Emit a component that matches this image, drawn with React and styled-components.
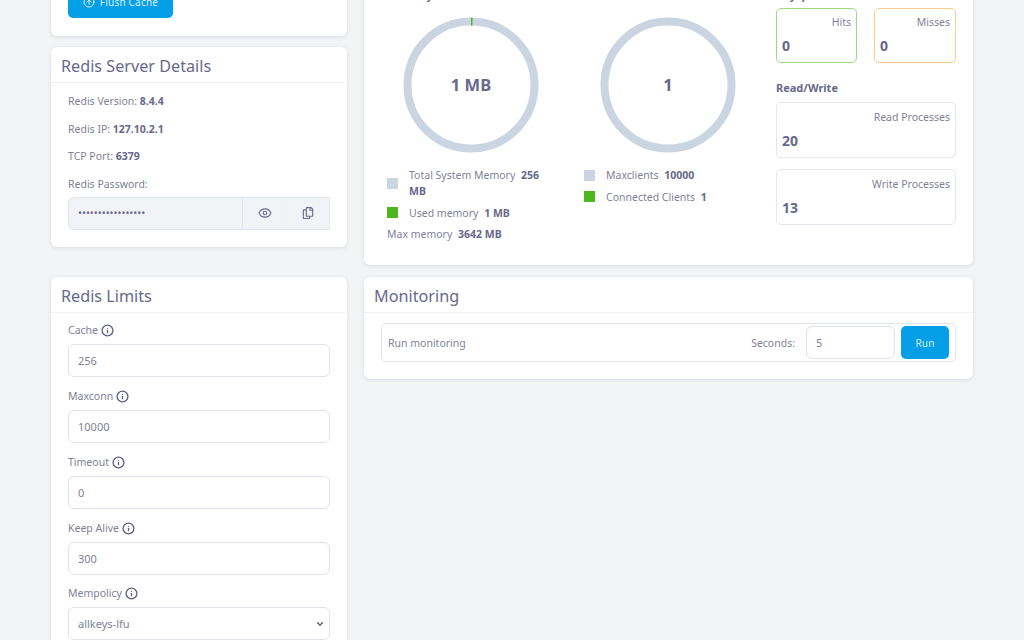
import React from "react";
import styled, { createGlobalStyle } from "styled-components";
import { CircleArrowUp, Eye, Info } from "lucide-react";
import { FaRegCopy } from "react-icons/fa";

const GlobalStyle = createGlobalStyle`
  html, body {
    margin: 0;
    height: 640px;
    overflow: hidden;
    background: #f3f4f6;
  }
  * { box-sizing: border-box; }
  body {
    font-family: "Noto Sans", "Open Sans", sans-serif;
    font-size: 10.5px;
    line-height: 16px;
    color: #7f7f98;
  }
`;

const STRONG = "#68688a";
const GREY = "#cbd5e1";
const GREEN = "#4cb71e";
const CHEVRON =
  "data:image/svg+xml,%3Csvg xmlns='http://www.w3.org/2000/svg' width='8' height='6' viewBox='0 0 8 6'%3E%3Cpath d='M1.2 1.4 4 4.2l2.8-2.8' fill='none' stroke='%2368688a' stroke-width='1.6'/%3E%3C/svg%3E";

const Page = styled.div`
  margin-top: -60px;
  padding: 0 51px;
  width: 1024px;
`;

const Row = styled.div`
  display: grid;
  grid-template-columns: 296px 609px;
  column-gap: 17px;
  align-items: ${(p) => p.$align || "stretch"};
  margin-bottom: 12px;
`;

const Stack = styled.div`
  display: flex;
  flex-direction: column;
  gap: 11px;
  padding-bottom: 18px;
`;

const Card = styled.section`
  background: #fff;
  border-radius: 6px;
  box-shadow: 0 1px 4px rgba(60, 70, 100, 0.14);
`;

const CardHeader = styled.h3`
  margin: 0;
  height: 36px;
  padding: 0 10px;
  font-size: 16.2px;
  font-weight: 400;
  line-height: 38px;
  color: ${STRONG};
  border-bottom: 1px solid #f1f2f6;
`;

const FlushBody = styled.div`
  padding: 46px 17px 18px;
`;

const Button = styled.button`
  display: inline-flex;
  align-items: center;
  justify-content: center;
  gap: 5px;
  height: ${(p) => (p.$wide ? "32px" : "33px")};
  width: ${(p) => (p.$wide ? "105px" : "48px")};
  padding: 0;
  font: inherit;
  font-size: 10px;
  letter-spacing: 0.2px;
  color: rgba(255, 255, 255, 0.85);
  background: #049fe6;
  border: 0;
  border-radius: 5px;
`;

const DetailsBody = styled.div`
  padding: 10px 17px 17px;
`;

const Detail = styled.div`
  margin-bottom: 11.6px;
  b {
    font-weight: 700;
    color: ${STRONG};
  }
`;

const PasswordLabel = styled.div`
  margin-bottom: 5px;
`;

const PasswordGroup = styled.div`
  display: flex;
  height: 33px;
  background: #f2f3f7;
  border: 1px solid #e2e5ee;
  border-radius: 6px 0 0 6px;
`;

const PasswordInput = styled.input`
  flex: 1;
  min-width: 0;
  padding: 0 9px;
  font: inherit;
  font-size: 10.5px;
  color: ${STRONG};
  background: transparent;
  border: 0;
  outline: 0;
`;

const IconCell = styled.div`
  display: flex;
  align-items: center;
  justify-content: center;
  width: ${(p) => (p.$faint ? "43px" : "44px")};
  color: #6c6c8e;
  border-left: 1px solid ${(p) => (p.$faint ? "#eef0f4" : "#e2e5ee")};
`;

const MetricsGrid = styled.div`
  display: grid;
  grid-template-columns: 197px 192px 180px;
  padding: 11px 0 23px 23px;
`;

const SectionLabel = styled.div`
  margin-bottom: ${(p) => p.$gap || 5}px;
  margin-top: ${(p) => p.$top || 0}px;
  font-size: 11px;
  font-weight: 700;
  color: ${STRONG};
`;

const ChartColumn = styled.div`
  width: 168px;
`;

const Donut = styled.div`
  display: grid;
  place-items: center;
  width: 136px;
  height: 136px;
  margin: 14px auto 14px;
  > * {
    grid-area: 1 / 1;
  }
`;

const DonutValue = styled.div`
  font-size: 16.5px;
  font-weight: 700;
  color: ${STRONG};
`;

const Legend = styled.div`
  display: flex;
  flex-direction: column;
  gap: 5.5px;
  b {
    margin-left: 3px;
    font-weight: 700;
    color: ${STRONG};
  }
`;

const LegendItem = styled.div`
  display: flex;
  align-items: center;
  gap: 11px;
`;

const Swatch = styled.span`
  flex: none;
  width: 11px;
  height: 11px;
  background: ${(p) => p.$color};
`;

const StatPair = styled.div`
  display: grid;
  grid-template-columns: 81px 82px;
  column-gap: 17px;
`;

const StatBox = styled.div`
  display: flex;
  flex-direction: column;
  height: ${(p) => (p.$short ? "55px" : "56px")};
  margin-bottom: ${(p) => p.$gap || 0}px;
  padding: ${(p) => (p.$short ? "5px" : "6px")} 5px 0 5px;
  text-align: right;
  border: 1px solid ${(p) => p.$border || "#e4e7ef"};
  border-radius: 5px;
`;

const StatValue = styled.div`
  margin-top: 6px;
  font-size: 14px;
  line-height: 20px;
  font-weight: 700;
  text-align: left;
  color: ${STRONG};
`;

const LimitsBody = styled.div`
  padding: 9px 17px 40px;
`;

const FieldLabel = styled.label`
  display: flex;
  align-items: center;
  gap: 3px;
  height: 16px;
  margin-bottom: 6px;
  svg {
    color: #5c5f82;
  }
`;

const Field = styled.div`
  margin-bottom: ${(p) => p.$gap || 11}px;
`;

const TextInput = styled.input`
  display: block;
  width: ${(p) => (p.$small ? "89px" : "100%")};
  height: 33px;
  padding: 0 9px;
  font: inherit;
  font-size: 11px;
  color: #7f7f98;
  background: #fff;
  border: 1px solid #dfe2ee;
  border-radius: 6px;
  outline: 0;
`;

const SelectInput = styled.select`
  display: block;
  width: 100%;
  height: 33px;
  padding: 0 9px;
  font: inherit;
  font-size: 11px;
  color: #7f7f98;
  appearance: none;
  background: #fff url("${CHEVRON}") no-repeat right 5px center;
  border: 1px solid #dfe2ee;
  border-radius: 6px;
  outline: 0;
`;

const MonitoringBody = styled.div`
  padding: 10px 17px 17px;
`;

const RunBar = styled.div`
  display: flex;
  align-items: center;
  height: 39px;
  padding: 0 6px;
  border: 1px solid #e2e5ee;
  border-radius: 5px;
`;

const RunTitle = styled.span`
  flex: 1;
`;

const SecondsLabel = styled.span`
  margin-right: 11px;
`;

const RunButton = styled(Button)`
  margin-left: 6px;
`;

function DonutChart({ value, total, label }) {
  const radius = 63.5;
  const length = 2 * Math.PI * radius;
  return (
    <Donut>
      <svg width="136" height="136" viewBox="0 0 136 136">
        <circle cx="68" cy="68" r={radius} fill="none" stroke={GREY} strokeWidth="8" />
        <circle
          cx="68"
          cy="68"
          r={radius}
          fill="none"
          stroke={GREEN}
          strokeWidth="8"
          strokeDasharray={`${(value / total) * length} ${length}`}
          transform="rotate(-90 68 68)"
        />
      </svg>
      <DonutValue>{label}</DonutValue>
    </Donut>
  );
}

function LimitField({ label, value, gap }) {
  return (
    <Field $gap={gap}>
      <FieldLabel>
        {label} <Info size={13} strokeWidth={2.4} />
      </FieldLabel>
      <TextInput defaultValue={value} />
    </Field>
  );
}

export default function App() {
  return (
    <Page>
      <GlobalStyle />
      <Row>
        <Stack>
          <Card>
            <FlushBody>
              <Button $wide>
                <CircleArrowUp size={12} /> Flush Cache
              </Button>
            </FlushBody>
          </Card>
          <Card>
            <CardHeader>Redis Server Details</CardHeader>
            <DetailsBody>
              <Detail>
                Redis Version: <b>8.4.4</b>
              </Detail>
              <Detail>
                Redis IP: <b>127.10.2.1</b>
              </Detail>
              <Detail>
                TCP Port: <b>6379</b>
              </Detail>
              <PasswordLabel>Redis Password:</PasswordLabel>
              <PasswordGroup>
                <PasswordInput type="password" readOnly value="aaaaaaaaaaaaaaaaa" />
                <IconCell>
                  <Eye size={14} />
                </IconCell>
                <IconCell $faint>
                  <FaRegCopy size={12} />
                </IconCell>
              </PasswordGroup>
            </DetailsBody>
          </Card>
        </Stack>
        <Card>
          <CardHeader>Redis Status</CardHeader>
          <MetricsGrid>
            <ChartColumn>
              <SectionLabel>Memory</SectionLabel>
              <DonutChart value={1} total={256} label="1 MB" />
              <Legend>
                <LegendItem>
                  <Swatch $color={GREY} />
                  <span>
                    Total System Memory <b>256 MB</b>
                  </span>
                </LegendItem>
                <LegendItem>
                  <Swatch $color={GREEN} />
                  <span>
                    Used memory <b>1 MB</b>
                  </span>
                </LegendItem>
                <div>
                  Max memory <b>3642 MB</b>
                </div>
              </Legend>
            </ChartColumn>
            <ChartColumn>
              <SectionLabel>Clients</SectionLabel>
              <DonutChart value={1} total={10000} label="1" />
              <Legend>
                <LegendItem>
                  <Swatch $color={GREY} />
                  <span>
                    Maxclients <b>10000</b>
                  </span>
                </LegendItem>
                <LegendItem>
                  <Swatch $color={GREEN} />
                  <span>
                    Connected Clients <b>1</b>
                  </span>
                </LegendItem>
              </Legend>
            </ChartColumn>
            <div>
              <SectionLabel>Keyspace</SectionLabel>
              <StatPair>
                <StatBox $short $border="#9bdb80">
                  Hits
                  <StatValue>0</StatValue>
                </StatBox>
                <StatBox $short $border="#ffc987">
                  Misses
                  <StatValue>0</StatValue>
                </StatBox>
              </StatPair>
              <SectionLabel $top={17} $gap={6}>
                Read/Write
              </SectionLabel>
              <StatBox $gap={11}>
                Read Processes
                <StatValue>20</StatValue>
              </StatBox>
              <StatBox>
                Write Processes
                <StatValue>13</StatValue>
              </StatBox>
            </div>
          </MetricsGrid>
        </Card>
      </Row>
      <Row $align="start">
        <Card>
          <CardHeader>Redis Limits</CardHeader>
          <LimitsBody>
            <LimitField label="Cache" value="256" />
            <LimitField label="Maxconn" value="10000" />
            <LimitField label="Timeout" value="0" />
            <LimitField label="Keep Alive" value="300" gap={10} />
            <Field>
              <FieldLabel>
                Mempolicy <Info size={13} strokeWidth={2.4} />
              </FieldLabel>
              <SelectInput defaultValue="allkeys-lfu">
                <option>allkeys-lfu</option>
                <option>allkeys-lru</option>
                <option>noeviction</option>
              </SelectInput>
            </Field>
          </LimitsBody>
        </Card>
        <Card>
          <CardHeader>Monitoring</CardHeader>
          <MonitoringBody>
            <RunBar>
              <RunTitle>Run monitoring</RunTitle>
              <SecondsLabel>Seconds:</SecondsLabel>
              <TextInput $small defaultValue="5" />
              <RunButton>Run</RunButton>
            </RunBar>
          </MonitoringBody>
        </Card>
      </Row>
    </Page>
  );
}
